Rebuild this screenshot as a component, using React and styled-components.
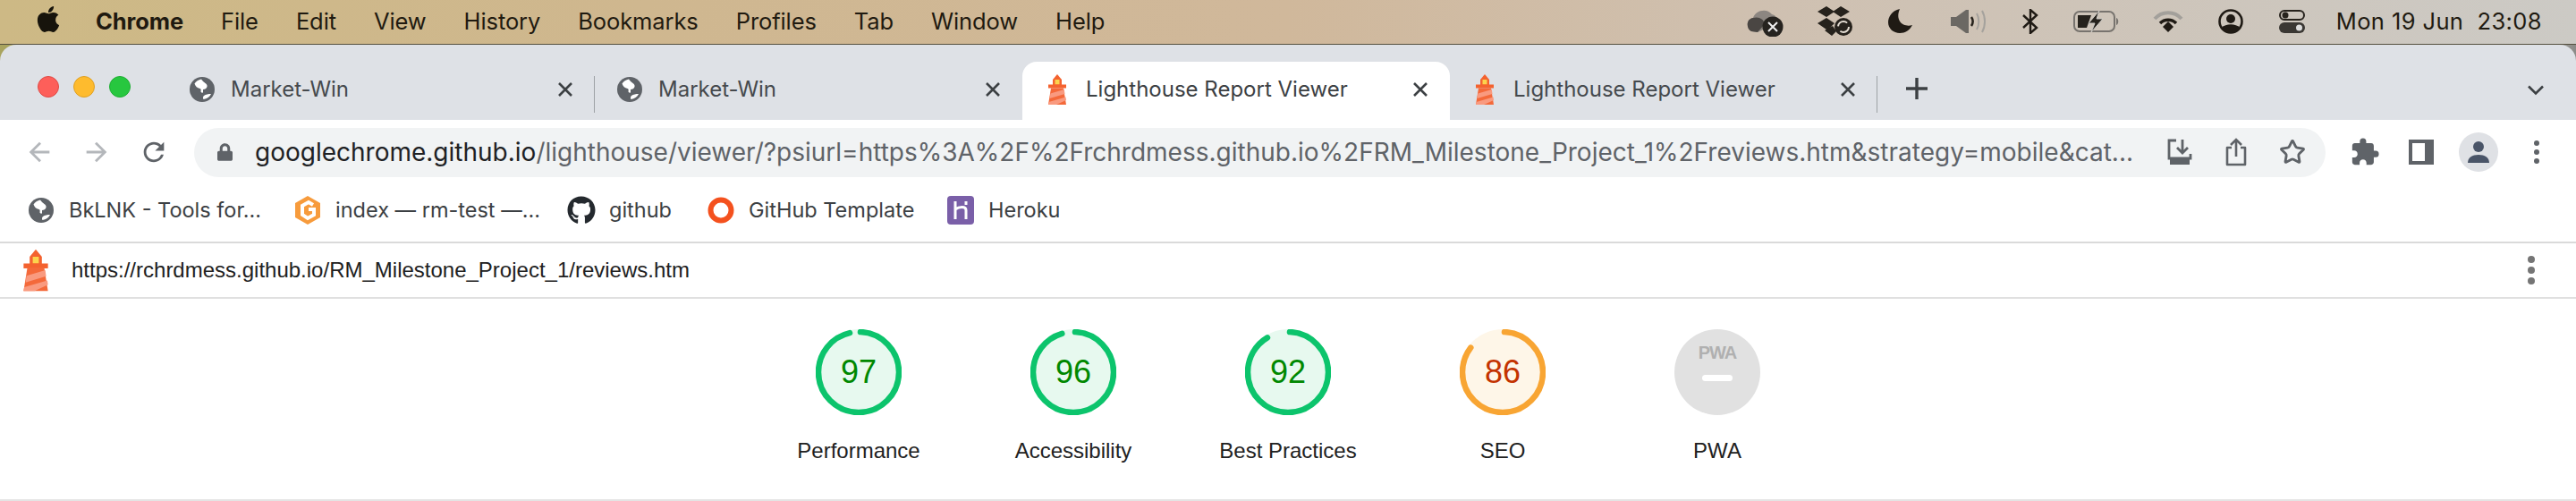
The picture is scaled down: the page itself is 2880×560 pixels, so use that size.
import React from 'react';
import styled, { createGlobalStyle } from 'styled-components';
import { FaApple, FaGithub, FaLock } from 'react-icons/fa';
import { MdArrowBack, MdArrowForward, MdRefresh, MdExtension } from 'react-icons/md';
import { Star } from 'lucide-react';

const GlobalStyle = createGlobalStyle`
  html, body {
    margin: 0;
    padding: 0;
    background: #fff;
  }
  * {
    box-sizing: border-box;
  }
`;

const Page = styled.div`
  width: 2880px;
  height: 560px;
  overflow: hidden;
  display: flex;
  flex-direction: column;
  background: #fff;
  font-family: Inter, 'Liberation Sans', sans-serif;
`;

const MenuBar = styled.div`
  height: 50px;
  flex: none;
  display: flex;
  align-items: center;
  padding: 0 38px 2px 40px;
  background: linear-gradient(90deg, #cdb985 0%, #cfb78f 25%, #d0b89b 50%, #cfc0b0 68%, #cccac5 100%);
  border-bottom: 1px solid #55503f;
  color: #1f1a10;
`;

const AppleMark = styled(FaApple)`
  width: 28px;
  height: 33px;
  color: #17140c;
  margin-right: 39px;
  margin-top: -4px;
`;

const MenuItems = styled.div`
  display: flex;
  gap: 42px;
`;

const MenuItem = styled.span`
  font-size: 25.5px;
  line-height: 30px;
  font-weight: ${(props) => (props.$bold ? 700 : 400)};
  letter-spacing: -0.1px;
`;

const StatusArea = styled.div`
  margin-left: auto;
  display: flex;
  align-items: center;
`;

const Status = styled.svg`
  flex: none;
  display: block;
  margin-left: ${(props) => props.$ml}px;
`;

const Clock = styled.span`
  margin-left: 35px;
  font-size: 25.5px;
  line-height: 30px;
  white-space: pre;
  letter-spacing: 0.4px;
`;

const TabStrip = styled.div`
  height: 84px;
  flex: none;
  display: flex;
  align-items: flex-end;
  padding-left: 187px;
  background: #dee1e6;
  border-radius: 18px 18px 0 0;
  position: relative;
`;

const WindowBack = styled.div`
  background: linear-gradient(90deg, #a9a45f 0%, #a9a45f 2%, #bbb8ae 98%, #8b8b88 100%);
`;

const Lights = styled.div`
  position: absolute;
  left: 42px;
  top: 35px;
  display: flex;
  gap: 16px;
`;

const Light = styled.span`
  width: 24px;
  height: 24px;
  border-radius: 50%;
  background: ${(props) => props.$color};
  border: 1px solid ${(props) => props.$edge};
`;

const Tab = styled.div`
  width: 478px;
  height: 65px;
  flex: none;
  display: flex;
  align-items: center;
  padding: 0 15px 4px 25px;
  position: relative;
  color: #3c4043;
  background: ${(props) => (props.$active ? '#fff' : 'transparent')};
  border-radius: ${(props) => (props.$active ? '16px 16px 0 0' : '0')};

  &::after {
    content: '';
    display: ${(props) => (props.$divider ? 'block' : 'none')};
    position: absolute;
    right: 0;
    top: 16px;
    height: 41px;
    width: 1.5px;
    background: #9ea2a6;
  }
`;

const TabFavicon = styled.span`
  width: 28px;
  display: flex;
  justify-content: center;
  flex: none;
`;

const TabTitle = styled.span`
  margin-left: 18px;
  font-size: 24px;
  line-height: 30px;
  flex: 1;
  white-space: nowrap;
  color: ${(props) => (props.$active ? '#3c4043' : '#45494d')};
`;

const CloseGlyph = styled.svg`
  flex: none;
  margin-right: 9px;
`;

const NewTab = styled.svg`
  flex: none;
  margin: 0 0 22px 31px;
`;

const TabMenu = styled.svg`
  flex: none;
  margin: 0 36px 27px auto;
`;

const Toolbar = styled.div`
  height: 70px;
  flex: none;
  display: flex;
  align-items: center;
  padding: 2px 36px 0 27px;
  background: #fff;
`;

const NavButton = styled.span`
  width: ${(props) => props.$w}px;
  flex: none;
  display: flex;
  color: ${(props) => props.$color};
  font-size: 34px;
`;

const Omnibox = styled.div`
  width: 2383px;
  height: 55px;
  flex: none;
  display: flex;
  align-items: center;
  padding: 0 22px 0 26px;
  border-radius: 28px;
  background: #f1f3f4;
`;

const LockIcon = styled(FaLock)`
  width: 17px;
  height: 22px;
  color: #5f6368;
  flex: none;
`;

const UrlText = styled.div`
  margin-left: 25px;
  flex: none;
  white-space: nowrap;
  font-size: 28px;
  line-height: 36px;
  color: #5f6368;

  b {
    font-weight: 400;
    color: #202124;
  }
`;

const OmniIcons = styled.div`
  margin-left: auto;
  display: flex;
  align-items: center;
  gap: 36px;
  color: #5f6368;
`;

const ToolIcons = styled.div`
  margin-left: 27px;
  display: flex;
  align-items: center;
  color: #5f6368;
`;

const Avatar = styled.span`
  width: 44px;
  height: 44px;
  border-radius: 50%;
  background: #dfe1e5;
  display: flex;
  align-items: center;
  justify-content: center;
  margin: 0 37px 0 28px;
`;

const SidePanel = styled.span`
  width: 28px;
  height: 28px;
  margin-left: 32px;
  border: 4px solid #5f6368;
  border-right-width: 10px;
  background: #fff;
`;

const Puzzle = styled(MdExtension)`
  width: 34px;
  height: 34px;
  color: #5f6368;
`;

const Kebab = styled.span`
  width: ${(props) => props.$size * 2}px;
  display: flex;
  flex-direction: column;
  align-items: center;
  gap: ${(props) => props.$gap}px;

  i {
    display: block;
    width: ${(props) => props.$size}px;
    height: ${(props) => props.$size}px;
    border-radius: 50%;
    background: ${(props) => props.$color};
  }
`;

const Bookmarks = styled.div`
  height: 68px;
  flex: none;
  display: flex;
  align-items: center;
  padding: 0 0 4px 30px;
  background: #fff;
  border-bottom: 2px solid #dadada;
`;

const Bookmark = styled.div`
  display: flex;
  align-items: center;
  width: ${(props) => props.$w}px;
  flex: none;
`;

const BookmarkIcon = styled.span`
  width: 32px;
  display: flex;
  justify-content: center;
  flex: none;
`;

const BookmarkLabel = styled.span`
  margin-left: 15px;
  font-size: 23.5px;
  line-height: 30px;
  color: #3c4043;
  white-space: nowrap;
`;

const ReportBar = styled.div`
  height: 62px;
  flex: none;
  display: flex;
  align-items: center;
  padding: 0 42px 0 25px;
  background: #fff;
  border-bottom: 2px solid #e0e0e0;
`;

const ReportUrl = styled.span`
  margin-left: 25px;
  font-family: 'Liberation Sans', Arial, sans-serif;
  font-size: 24px;
  line-height: 30px;
  color: #212121;
  flex: 1;
`;

const Gauges = styled.div`
  flex: 1;
  display: flex;
  justify-content: center;
  padding-top: 34px;
  background: #fff;
  border-bottom: 2px solid #e4e4e4;
`;

const GaugeBox = styled.div`
  width: 240px;
  display: flex;
  flex-direction: column;
  align-items: center;
`;

const Dial = styled.div`
  width: 96px;
  height: 96px;
  position: relative;
`;

const Score = styled.div`
  position: absolute;
  inset: 0;
  display: flex;
  align-items: center;
  justify-content: center;
  font-family: 'Liberation Sans', Arial, sans-serif;
  font-size: 36px;
  color: ${(props) => props.$color};
`;

const PwaMark = styled.div`
  position: absolute;
  left: 0;
  right: 0;
  top: 16px;
  text-align: center;
  font-family: 'Liberation Sans', Arial, sans-serif;
  font-size: 20px;
  line-height: 20px;
  font-weight: 700;
  color: #b0b0b0;
  letter-spacing: -1px;
`;

const PwaDash = styled.div`
  position: absolute;
  left: 31px;
  top: 51px;
  width: 34px;
  height: 7px;
  border-radius: 4px;
  background: #fff;
`;

const GaugeLabel = styled.div`
  margin-top: 25px;
  font-family: 'Liberation Sans', Arial, sans-serif;
  font-size: 24px;
  line-height: 30px;
  color: #212121;
  white-space: nowrap;
`;

function Globe({ size = 28 }) {
  return (
    <svg width={size} height={size} viewBox="0 0 28 28">
      <circle cx="14" cy="14" r="14" fill="#5f6368" />
      <path d="M13 2.500c-3 .5-6 2.500-7.500 5 1 3 3 5 6 5.500 1 .2 1.500 1.500 1 3-.3 1 1 2 2.500 1.500V14c2 0 4-1 4.500-3 .4-2-.5-3-2-4-1-.8-2.500-2-4.500-4.500zM16 21c2-1.500 5-2 8-2-1.500 3-4.500 5.500-8.500 6-1-1.500-.5-3 .5-4z" fill="#fff" />
    </svg>
  );
}

function Lighthouse({ width = 22, height = 34 }) {
  return (
    <svg width={width} height={height} viewBox="0 0 22 34">
      <path d="M11 0l5 6v6H6V6z" fill="#f4622f" />
      <rect x="8.500" y="6" width="5" height="5.500" fill="#fcd34d" />
      <rect x="1" y="11.500" width="20" height="4" fill="#f4622f" />
      <path d="M4 15.500h14l3 18.500H1z" fill="#f4693a" />
      <path d="M3.400 21.500L18.800 17l.7 5L2.600 27zM1.500 31l19-5.500.5 3.500L10 34H1z" fill="#f99a7f" />
    </svg>
  );
}

function Close() {
  return (
    <CloseGlyph width="18" height="18" viewBox="0 0 18 18">
      <path d="M2 2l14 14M16 2L2 16" stroke="#3c4043" strokeWidth="2.600" />
    </CloseGlyph>
  );
}

function Gauge({ label, score, stroke, fill, text }) {
  const c = 2 * Math.PI * 45;
  const len = (score / 100) * c;
  return (
    <GaugeBox>
      <Dial>
        <svg width="96" height="96" viewBox="0 0 96 96">
          <circle cx="48" cy="48" r="48" fill={fill} />
          <circle
            cx="48"
            cy="48"
            r="45"
            fill="none"
            stroke={stroke}
            strokeWidth="6.500"
            strokeLinecap="round"
            strokeDasharray={`${len - 4} ${c}`}
            strokeDashoffset="-2"
            transform="rotate(-90 48 48)"
          />
        </svg>
        <Score $color={text}>{score}</Score>
      </Dial>
      <GaugeLabel>{label}</GaugeLabel>
    </GaugeBox>
  );
}

function PwaGauge() {
  return (
    <GaugeBox>
      <Dial>
        <svg width="96" height="96" viewBox="0 0 96 96">
          <circle cx="48" cy="48" r="48" fill="#e1e1e1" />
        </svg>
        <PwaMark>PWA</PwaMark>
        <PwaDash />
      </Dial>
      <GaugeLabel>PWA</GaugeLabel>
    </GaugeBox>
  );
}

const GREEN = { stroke: '#0cc46c', fill: '#e7f9ef', text: '#008800' };
const ORANGE = { stroke: '#f8a533', fill: '#fef6e8', text: '#c33300' };

const menu = ['File', 'Edit', 'View', 'History', 'Bookmarks', 'Profiles', 'Tab', 'Window', 'Help'];

const longUrl =
  '/lighthouse/viewer/?psiurl=https%3A%2F%2Frchrdmess.github.io%2FRM_Milestone_Project_1%2Freviews.htm&strategy=mobile&cat...';

export default function App() {
  return (
    <Page>
      <GlobalStyle />
      <MenuBar>
        <AppleMark />
        <MenuItems>
          <MenuItem $bold>Chrome</MenuItem>
          {menu.map((m) => (
            <MenuItem key={m}>{m}</MenuItem>
          ))}
        </MenuItems>
        <StatusArea>
          <Status $ml={0} width="41" height="34" viewBox="0 0 41 34">
            <path d="M5 28C-1 25-1 14 7 13c2-8 15-12 21-4 5 1 7 6 6 10L12 29z" fill="#8c8681" />
            <path d="M5 28C-1 25-1 14 7 13c6-2 12 1 13 7L12 29z" fill="#4a4643" />
            <circle cx="29" cy="23" r="11.500" fill="#26231f" />
            <path d="M24 18l10 10M34 18L24 28" stroke="#eee" strokeWidth="2" />
          </Status>
          <Status $ml={38} width="40" height="33" viewBox="0 0 40 33">
            <path d="M10 0l9 6-9 6-10-6zM26 0l10 6-10 6-9-6zM10 13l9 6-4 4-5 3-10-7zM21 28l-5 5-8-6 9-5z" fill="#26221c" />
            <circle cx="29" cy="23" r="10" fill="#26221c" />
            <circle cx="29" cy="23" r="6" fill="none" stroke="#e4ddd3" strokeWidth="2" strokeDasharray="13 6" />
          </Status>
          <Status $ml={39} width="27" height="27" viewBox="0 0 27 27">
            <path d="M13 0C4 2 0 9 0 15c0 7 6 12 13 12 6 0 11-3 14-9-9 3-20-4-14-18z" fill="#1f1a14" />
          </Status>
          <Status $ml={43} width="39" height="26" viewBox="0 0 39 26">
            <path d="M0 8h6l11-8h3v26h-3L6 18H0z" fill="#6b6863" />
            <path d="M23 8c2 3 2 7 0 10" stroke="#26221c" strokeWidth="2.500" fill="none" />
            <path d="M29 4c3 5 3 13 0 18M35 1c4 7 4 17 0 24" stroke="#a5a29d" strokeWidth="2" fill="none" />
          </Status>
          <Status $ml={41} width="18" height="28" viewBox="0 0 18 28">
            <path d="M1 7l15 14-7 6V1l7 6L1 21" stroke="#1f1a14" strokeWidth="2.400" fill="none" />
          </Status>
          <Status $ml={39} width="52" height="24" viewBox="0 0 52 24">
            <rect x="1" y="1" width="45" height="22" rx="6" fill="none" stroke="#77736e" strokeWidth="2" />
            <path d="M48 8c3 1 3 7 0 8z" fill="#77736e" />
            <path d="M5 5h15l-5 14H5z" fill="#26221c" />
            <path d="M29 0L17 14h7l-4 10 13-15h-7z" fill="#26221c" stroke="#cccac5" strokeWidth="1" />
          </Status>
          <Status $ml={37} width="34" height="25" viewBox="0 0 34 25">
            <path d="M2 10c8-9 22-9 30 0" stroke="#a3a09b" strokeWidth="4" fill="none" />
            <path d="M8 15c5-5 13-5 18 0" stroke="#1f1a14" strokeWidth="3.500" fill="none" />
            <path d="M11 19l6-6 6 6-6 6z" fill="#1f1a14" />
          </Status>
          <Status $ml={39} width="28" height="28" viewBox="0 0 28 28">
            <circle cx="14" cy="14" r="12.500" fill="none" stroke="#1f1a14" strokeWidth="2.600" />
            <circle cx="14" cy="11" r="5" fill="#1f1a14" />
            <path d="M4 21c4-5 16-5 20 0-3 8-17 8-20 0z" fill="#1f1a14" />
          </Status>
          <Status $ml={40} width="29" height="26" viewBox="0 0 29 26">
            <rect x="1" y="1" width="27" height="10" rx="5" fill="none" stroke="#26221c" strokeWidth="2" />
            <circle cx="7" cy="6" r="3.500" fill="#26221c" />
            <rect y="14" width="29" height="12" rx="6" fill="#3a3733" />
            <circle cx="22.500" cy="20" r="3.500" fill="#ddd" />
          </Status>
          <Clock>{'Mon 19 Jun  23:08'}</Clock>
        </StatusArea>
      </MenuBar>

      <WindowBack>
        <TabStrip>
          <Lights>
            <Light $color="#fd5f5a" $edge="#df4a45" />
            <Light $color="#febb2e" $edge="#dfa023" />
            <Light $color="#27c73f" $edge="#1fae34" />
          </Lights>
          <Tab $divider>
            <TabFavicon>
              <Globe />
            </TabFavicon>
            <TabTitle>Market-Win</TabTitle>
            <Close />
          </Tab>
          <Tab>
            <TabFavicon>
              <Globe />
            </TabFavicon>
            <TabTitle>Market-Win</TabTitle>
            <Close />
          </Tab>
          <Tab $active>
            <TabFavicon>
              <Lighthouse />
            </TabFavicon>
            <TabTitle $active>Lighthouse Report Viewer</TabTitle>
            <Close />
          </Tab>
          <Tab $divider>
            <TabFavicon>
              <Lighthouse />
            </TabFavicon>
            <TabTitle>Lighthouse Report Viewer</TabTitle>
            <Close />
          </Tab>
          <NewTab width="26" height="26" viewBox="0 0 26 26">
            <path d="M13 1v24M1 13h24" stroke="#3c4043" strokeWidth="3.400" />
          </NewTab>
          <TabMenu width="18" height="12" viewBox="0 0 18 12">
            <path d="M1 1.500l8 8 8-8" stroke="#3c4043" strokeWidth="2.600" fill="none" />
          </TabMenu>
        </TabStrip>
      </WindowBack>

      <Toolbar>
        <NavButton $w={64} $color="#b4b7bb">
          <MdArrowBack />
        </NavButton>
        <NavButton $w={64} $color="#b4b7bb">
          <MdArrowForward />
        </NavButton>
        <NavButton $w={62} $color="#5f6368">
          <MdRefresh />
        </NavButton>
        <Omnibox>
          <LockIcon />
          <UrlText>
            <b>googlechrome.github.io</b>
            {longUrl}
          </UrlText>
          <OmniIcons>
            <svg width="30" height="30" viewBox="0 0 30 30">
              <path d="M11 2H3v20h24v-5" fill="none" stroke="#5f6368" strokeWidth="2.800" />
              <path d="M18 1v14M12 10l6 6 6-6" fill="none" stroke="#5f6368" strokeWidth="2.800" />
              <rect x="4" y="23" width="22" height="6" fill="#5f6368" />
            </svg>
            <svg width="24" height="32" viewBox="0 0 24 32">
              <path d="M7 11H2v19h20V11h-5" fill="none" stroke="#5f6368" strokeWidth="2.600" strokeLinejoin="round" />
              <path d="M12 21V2M6 8l6-6 6 6" fill="none" stroke="#5f6368" strokeWidth="2.600" />
            </svg>
            <Star size={30} strokeWidth={2.300} />
          </OmniIcons>
        </Omnibox>
        <ToolIcons>
          <Puzzle />
          <SidePanel />
          <Avatar>
            <svg width="26" height="26" viewBox="0 0 26 26">
              <circle cx="13" cy="7" r="6" fill="#4a5568" />
              <path d="M1 25c0-6 5-9 12-9s12 3 12 9z" fill="#4a5568" />
            </svg>
          </Avatar>
          <Kebab $size={6} $gap={4} $color="#5f6368">
            <i />
            <i />
            <i />
          </Kebab>
        </ToolIcons>
      </Toolbar>

      <Bookmarks>
        <Bookmark $w={298}>
          <BookmarkIcon>
            <Globe />
          </BookmarkIcon>
          <BookmarkLabel>BkLNK - Tools for...</BookmarkLabel>
        </Bookmark>
        <Bookmark $w={306}>
          <BookmarkIcon>
            <svg width="30" height="32" viewBox="0 0 30 32">
              <path d="M15 0l14 8v16l-14 8-14-8V8z" fill="#f79b3c" />
              <path d="M21 10l-5-3-7 4v10l6 4 7-4v-6h-6" fill="none" stroke="#fff" strokeWidth="4" />
            </svg>
          </BookmarkIcon>
          <BookmarkLabel>index — rm-test —...</BookmarkLabel>
        </Bookmark>
        <Bookmark $w={156}>
          <BookmarkIcon>
            <FaGithub size={32} color="#24292e" />
          </BookmarkIcon>
          <BookmarkLabel>github</BookmarkLabel>
        </Bookmark>
        <Bookmark $w={268}>
          <BookmarkIcon>
            <svg width="30" height="30" viewBox="0 0 30 30">
              <circle cx="15" cy="15" r="11.500" fill="none" stroke="#f4511e" strokeWidth="6" />
            </svg>
          </BookmarkIcon>
          <BookmarkLabel>GitHub Template</BookmarkLabel>
        </Bookmark>
        <Bookmark $w={140}>
          <BookmarkIcon>
            <svg width="30" height="32" viewBox="0 0 30 32">
              <rect width="30" height="32" rx="4" fill="#7a5fa8" />
              <path d="M9 6v20M9 15c4-3 12-4 12 1v10M21 6v4" fill="none" stroke="#fff" strokeWidth="3" />
            </svg>
          </BookmarkIcon>
          <BookmarkLabel>Heroku</BookmarkLabel>
        </Bookmark>
      </Bookmarks>

      <ReportBar>
        <Lighthouse width={30} height={48} />
        <ReportUrl>https://rchrdmess.github.io/RM_Milestone_Project_1/reviews.htm</ReportUrl>
        <Kebab $size={8} $gap={4} $color="#757575">
          <i />
          <i />
          <i />
        </Kebab>
      </ReportBar>

      <Gauges>
        <Gauge label="Performance" score={97} {...GREEN} />
        <Gauge label="Accessibility" score={96} {...GREEN} />
        <Gauge label="Best Practices" score={92} {...GREEN} />
        <Gauge label="SEO" score={86} {...ORANGE} />
        <PwaGauge />
      </Gauges>
    </Page>
  );
}
